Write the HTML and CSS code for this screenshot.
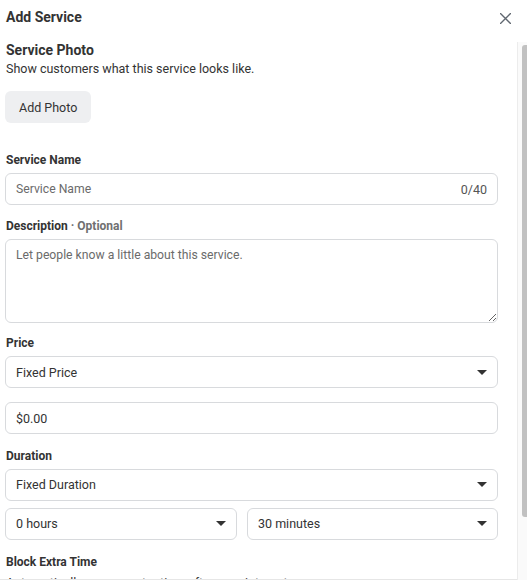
FILE: index.html
```html
<!DOCTYPE html>
<html lang="en">
<head>
<meta charset="UTF-8">
<meta name="viewport" content="width=device-width, initial-scale=1.0">
<title>Add Service</title>
<link rel="stylesheet" href="styles.css">
</head>
<body>

<div class="dialog">
    <header class="dialog-header">
        <h1>Add Service</h1>
        <button class="close-btn" type="button" aria-label="Close">
            <svg width="11" height="11" viewBox="0 0 11 11">
                <path d="M0.5 0.5 L10.5 10.5 M10.5 0.5 L0.5 10.5" stroke="#606770" stroke-width="1.4" stroke-linecap="round"/>
            </svg>
        </button>
    </header>

    <div class="dialog-main">
        <div class="dialog-body">
            <section class="photo-section">
                <h2>Service Photo</h2>
                <p class="hint">Show customers what this service looks like.</p>
                <button class="grey-btn" type="button">Add Photo</button>
            </section>

            <section class="field">
                <label class="field-label">Service Name</label>
                <div class="box">
                    <span class="placeholder">Service Name</span>
                    <span class="counter">0/40</span>
                </div>
            </section>

            <section class="field tight">
                <label class="field-label">Description <span class="optional">· Optional</span></label>
                <textarea class="textarea" placeholder="Let people know a little about this service."></textarea>
            </section>

            <section class="field tight">
                <label class="field-label">Price</label>
                <div class="box select">
                    <span>Fixed Price</span>
                    <span class="caret"></span>
                </div>
                <div class="box spaced">
                    <span>$0.00</span>
                </div>
            </section>

            <section class="field">
                <label class="field-label">Duration</label>
                <div class="box select">
                    <span>Fixed Duration</span>
                    <span class="caret"></span>
                </div>
                <div class="split-row">
                    <div class="box select hours">
                        <span>0 hours</span>
                        <span class="caret"></span>
                    </div>
                    <div class="box select minutes">
                        <span>30 minutes</span>
                        <span class="caret"></span>
                    </div>
                </div>
            </section>

            <section class="field last">
                <label class="field-label">Block Extra Time</label>
                <p class="hint">Automatically reserve extra time after appointment.</p>
            </section>
        </div>

        <div class="scrollbar">
            <div class="scroll-thumb"></div>
        </div>
    </div>
</div>

</body>
</html>
```

FILE: styles.css
```css
body {
    margin: 0;
    padding: 0;
    font-family: Roboto, "Liberation Sans", Arial, sans-serif;
    background-color: #fff;
    color: #1c1e21;
}
.dialog {
    width: 527px;
    height: 584px;
    display: flex;
    flex-direction: column;
    overflow: hidden;
}
.dialog-header {
    height: 42px;
    flex-shrink: 0;
    display: flex;
    justify-content: space-between;
    align-items: flex-start;
    padding: 0 16px 0 6px;
}
.dialog-header h1 {
    margin: 0;
    padding-top: 9px;
    font-size: 14px;
    line-height: 17px;
    font-weight: 700;
    color: #333;
}
.close-btn {
    background: none;
    border: none;
    padding: 0;
    margin-top: 13px;
    width: 11px;
    height: 11px;
    cursor: pointer;
    display: flex;
}
.dialog-main {
    height: 538px;
    flex-shrink: 0;
    display: flex;
}
.dialog-body {
    flex: 1;
    overflow: hidden;
    padding: 0 19px 0 5px;
    border-bottom: 1px solid #e6e6e6;
}
/* fake scrollbar, the page does not actually scroll */
.scrollbar {
    width: 10px;
    flex-shrink: 0;
    background-color: #fafafa;
    border-left: 1px solid #ececec;
    padding: 3px 0 0 4px;
    box-sizing: border-box;
}
.scroll-thumb {
    width: 7px;
    height: 472px;
    background-color: #c1c1c1;
    border-radius: 3px 0 0 3px;
}
.photo-section h2 {
    margin: 0;
    padding-left: 1px;
    font-size: 14px;
    line-height: 17px;
    font-weight: 700;
    color: #333;
}
.hint {
    margin: 2px 0 0 1px;
    font-size: 12.5px;
    line-height: 16px;
    color: #333;
    white-space: nowrap;
}
.grey-btn {
    margin-top: 14px;
    height: 32px;
    padding: 0 14px;
    border: none;
    border-radius: 6px;
    background-color: #eeeff1;
    font-family: inherit;
    font-size: 12.5px;
    color: #333;
    cursor: pointer;
}
.field {
    margin-top: 13.5px;
}
.field.tight {
    margin-top: 12.5px;
}
.photo-section + .field {
    margin-top: 29px;
}
.field.last {
    margin-top: 14.5px;
}
.field-label {
    display: block;
    margin: 0 0 5px 1px;
    font-size: 12px;
    line-height: 16px;
    font-weight: 700;
    color: #333;
}
.optional {
    color: #707070;
}
.box {
    height: 32px;
    box-sizing: border-box;
    border: 1px solid #d8dadd;
    border-radius: 6px;
    padding: 0 10px 0 10px;
    display: flex;
    align-items: center;
    justify-content: space-between;
    font-size: 12.5px;
    color: #333;
}
.spaced {
    margin-top: 14px;
}
.placeholder {
    color: #6b6b6b;
    font-size: 12.2px;
}
.counter {
    color: #555;
}
.textarea {
    display: block;
    width: 100%;
    height: 84px;
    box-sizing: border-box;
    border: 1px solid #d8dadd;
    border-radius: 6px;
    padding: 8px 10px;
    margin: 0;
    font-family: inherit;
    font-size: 12.2px;
    color: #333;
    resize: vertical;
    outline: none;
}
.textarea::placeholder {
    color: #6b6b6b;
}
.caret {
    width: 0;
    height: 0;
    border-left: 5px solid transparent;
    border-right: 5px solid transparent;
    border-top: 5px solid #333;
}
.split-row {
    display: flex;
    gap: 10px;
    margin-top: 7px;
}
.hours {
    width: 232px;
    flex-shrink: 0;
}
.minutes {
    flex: 1;
}
```
